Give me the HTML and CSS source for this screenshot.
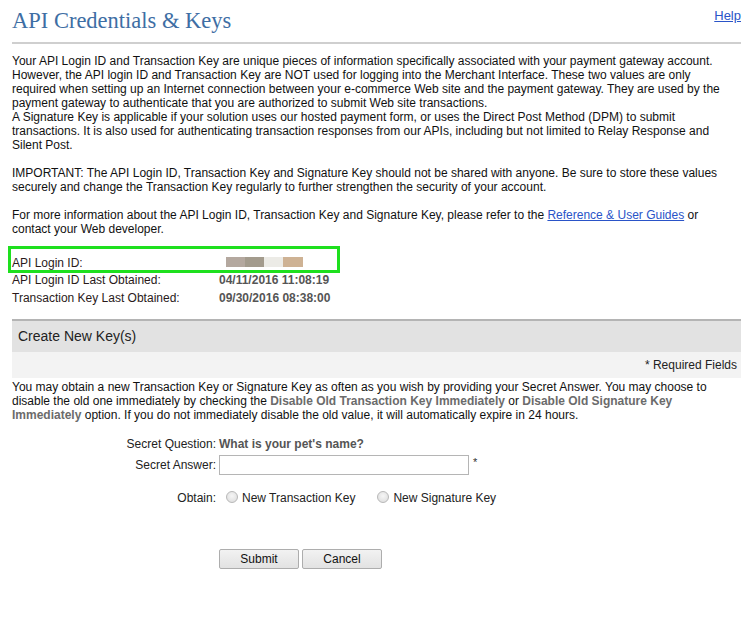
FILE: index.html
```html
<!DOCTYPE html>
<html>
<head>
<meta charset="utf-8">
<link rel="stylesheet" href="styles.css">
</head>
<body>
<div class="page">
  <div class="titlebar">
    <h1 class="title">API Credentials &amp; Keys</h1>
    <a class="help" href="#">Help</a>
  </div>
  <div class="intro">
    <p class="p1">Your API Login ID and Transaction Key are unique pieces of information specifically associated with your payment gateway account.<br>However, the API login ID and Transaction Key are NOT used for logging into the Merchant Interface. These two values are only<br>required when setting up an Internet connection between your e-commerce Web site and the payment gateway. They are used by the<br>payment gateway to authenticate that you are authorized to submit Web site transactions.</p>
    <p class="p2">A Signature Key is applicable if your solution uses our hosted payment form, or uses the Direct Post Method (DPM) to submit<br>transactions. It is also used for authenticating transaction responses from our APIs, including but not limited to Relay Response and<br>Silent Post.</p>
    <p class="p2">IMPORTANT: The API Login ID, Transaction Key and Signature Key should not be shared with anyone. Be sure to store these values<br>securely and change the Transaction Key regularly to further strengthen the security of your account.</p>
    <p class="p2">For more information about the API Login ID, Transaction Key and Signature Key, please refer to the <a href="#" class="link">Reference &amp; User Guides</a> or<br>contact your Web developer.</p>
  </div>
  <div class="info">
    <div class="row highlight">
      <span class="lbl">API Login ID:</span>
      <span class="redact"><i class="r1"></i><i class="r2"></i><i class="r3"></i><i class="r4"></i></span>
    </div>
    <div class="row">
      <span class="lbl">API Login ID Last Obtained:</span>
      <span class="val">04/11/2016 11:08:19</span>
    </div>
    <div class="row">
      <span class="lbl">Transaction Key Last Obtained:</span>
      <span class="val">09/30/2016 08:38:00</span>
    </div>
  </div>
  <div class="section-head">Create New Key(s)</div>
  <div class="required">* Required Fields</div>
  <p class="desc">You may obtain a new Transaction Key or Signature Key as often as you wish by providing your Secret Answer. You may choose to<br>disable the old one immediately by checking the <b>Disable Old Transaction Key Immediately</b> or <b>Disable Old Signature Key<br>Immediately</b> option. If you do not immediately disable the old value, it will automatically expire in 24 hours.</p>
  <div class="form">
    <div class="frow q">
      <span class="flbl">Secret Question:</span>
      <span class="fval">What is your pet's name?</span>
    </div>
    <div class="frow a">
      <span class="flbl">Secret Answer:</span>
      <span class="fval"><input type="text" class="answer"><span class="star">*</span></span>
    </div>
    <div class="frow o">
      <span class="flbl">Obtain:</span>
      <span class="fval radios">
        <label class="opt"><span class="radio"></span>New Transaction Key</label>
        <label class="opt"><span class="radio"></span>New Signature Key</label>
      </span>
    </div>
    <div class="frow btns">
      <span class="flbl"></span>
      <span class="fval"><button class="btn">Submit</button><button class="btn">Cancel</button></span>
    </div>
  </div>
</div>
</body>
</html>
```

FILE: styles.css
```css
html, body {
  margin: 0;
  padding: 0;
  background: #fff;
}
body {
  font-family: "Liberation Sans", Arial, sans-serif;
  font-size: 12px;
  color: #222;
}
.page {
  padding: 0 8px 0 12px;
}
.titlebar {
  display: flex;
  justify-content: space-between;
  align-items: flex-start;
  border-bottom: 2px solid #cfcfcf;
  height: 44px;
  box-sizing: border-box;
}
.title {
  margin: 0;
  padding-top: 8px;
  font-family: "Liberation Serif", Georgia, serif;
  font-weight: normal;
  font-size: 22.5px;
  line-height: 26px;
  color: #3e6ea4;
}
.help {
  margin-top: 8px;
  color: #2a54c8;
  font-size: 13px;
  text-decoration: underline;
}
.intro {
  padding-top: 10px;
  line-height: 14px;
  color: #111;
  white-space: nowrap;
}
.intro p {
  margin: 0;
}
.intro .p2 {
  margin-bottom: 14px;
}
.link {
  color: #2a54c8;
  text-decoration: underline;
}
.info {
  margin-top: -4px;
}
.row {
  display: flex;
  height: 18px;
  align-items: center;
  color: #2a1a1a;
  font-size: 12px;
}
.row .lbl {
  width: 207px;
}
.highlight {
  margin-left: -4px;
  padding-left: 1px;
  width: 325px;
  height: 21px;
  border: 3px solid #1ee01e;
  margin-bottom: -2px;
}
.highlight .lbl {
  width: 214px;
  padding-top: 6px;
}
.redact {
  display: flex;
  padding-top: 4px;
}
.redact i {
  display: block;
  width: 19px;
  height: 10px;
}
.redact .r1 { background: #b4a89f; }
.redact .r2 { background: #a39b8d; }
.redact .r3 { background: #ecebe6; }
.redact .r4 { background: #ceb294; width: 20px; }
.val {
  font-weight: bold;
  color: #555;
}
.section-head {
  margin-top: 12px;
  border-top: 2px solid #b4b4b4;
  background: #e2e2e2;
  height: 31px;
  line-height: 31px;
  padding-left: 6px;
  font-size: 14px;
  color: #222;
}
.required {
  background: #f3f3f3;
  height: 26px;
  line-height: 26px;
  text-align: right;
  padding-right: 4px;
  color: #222;
}
.desc {
  margin: 2px 0 0 0;
  line-height: 14px;
  color: #111;
  white-space: nowrap;
}
.desc b {
  color: #6b6b6b;
}
.form {
  margin-top: 14px;
}
.frow {
  display: flex;
  align-items: center;
}
.flbl {
  width: 204px;
  text-align: right;
  padding-right: 3px;
  color: #222;
}
.fval {
  display: flex;
  align-items: center;
}
.q {
  height: 16px;
}
.q .fval {
  font-weight: bold;
  color: #555;
}
.a {
  height: 22px;
  margin-top: 2px;
}
.answer {
  width: 250px;
  height: 20px;
  box-sizing: border-box;
  border: 1px solid #b5b5b5;
  margin: 0;
  padding: 0 2px;
}
.star {
  margin-left: 4px;
  margin-top: -6px;
  color: #333;
  font-size: 11px;
}
.o {
  margin-top: 11px;
  height: 22px;
}
.o .flbl {
  padding-right: 4px;
}
.radios {
  display: flex;
  padding-left: 6px;
}
.opt {
  display: flex;
  align-items: center;
  color: #222;
  margin-right: 22px;
}
.radio {
  width: 10px;
  height: 10px;
  border-radius: 50%;
  border: 1px solid #b8b8b8;
  background: radial-gradient(circle at 50% 40%, #f6f6f6, #dadada);
  margin-right: 4px;
  margin-top: -2px;
}
.btns {
  margin-top: 40px;
}
.btn {
  font-family: "Liberation Sans", Arial, sans-serif;
  font-size: 12px;
  color: #111;
  width: 80px;
  height: 20px;
  margin: 0 3px 0 0;
  padding: 0;
  border: 1px solid #adadad;
  border-radius: 2px;
  background: linear-gradient(#f2f2f2, #e2e2e2);
}
```
